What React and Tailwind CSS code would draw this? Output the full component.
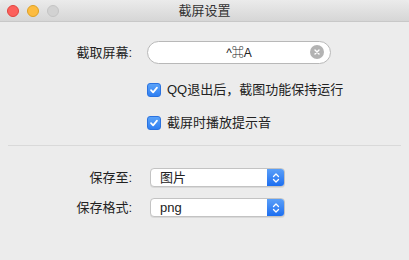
import React, { useState } from 'react';

const font = { fontFamily: '"Liberation Sans", "Noto Sans CJK SC", sans-serif' };

const Checkbox = ({ checked, onChange, label }) => (
  <label className="flex items-center h-[16px] cursor-default">
    <span
      onClick={onChange}
      className="flex items-center justify-center w-[14px] h-[14px] rounded-[3px] bg-gradient-to-b from-[#5aa2f8] to-[#2f7ff2] border border-[#2a72e0]"
    >
      {checked && (
        <svg width="10" height="10" viewBox="0 0 10 10">
          <path d="M2 5.2 L4.1 7.4 L8 2.6" fill="none" stroke="#fff" strokeWidth="1.7" strokeLinecap="round" strokeLinejoin="round" />
        </svg>
      )}
    </span>
    <span className="ml-[6px] text-[13px] leading-[16px] text-[#222]">{label}</span>
  </label>
);

const Popup = ({ value }) => (
  <div className="flex w-[135px] h-[19px] rounded-[4px] bg-white border border-[#c3c3c3] shadow-[0_1px_0_rgba(0,0,0,0.08)] overflow-hidden">
    <span className="flex-1 pl-[9px] text-[13px] leading-[17px] text-[#222]">{value}</span>
    <span className="flex items-center justify-center w-[17px] bg-gradient-to-b from-[#5a9ff8] to-[#1c6ef0]">
      <svg width="8" height="12" viewBox="0 0 8 12">
        <path d="M1.5 4.5 L4 2 L6.5 4.5 M1.5 7.5 L4 10 L6.5 7.5" fill="none" stroke="#fff" strokeWidth="1.3" strokeLinecap="round" strokeLinejoin="round" />
      </svg>
    </span>
  </div>
);

const App = () => {
  const [quitKeep, setQuitKeep] = useState(true);
  const [sound, setSound] = useState(true);

  return (
    <div className="w-[409px] h-[260px] bg-[#ececec] overflow-hidden" style={font}>
      {/* title bar */}
      <div className="relative flex items-center justify-center h-[22px] bg-gradient-to-b from-[#ebebeb] to-[#d6d6d6] border-b border-[#c8c8c8] rounded-t-[5px]">
        <div className="absolute left-[7px] top-[5px] flex gap-[8px]">
          <span className="w-[12px] h-[12px] rounded-full bg-[#fc605c] border border-[#e0443e]" />
          <span className="w-[12px] h-[12px] rounded-full bg-[#fdbc40] border border-[#dea123]" />
          <span className="w-[12px] h-[12px] rounded-full bg-[#d2d2d2] border border-[#c4c4c4]" />
        </div>
        <span className="text-[13px] leading-[16px] text-[#333]">截屏设置</span>
      </div>

      <div className="pt-[19px]">
        {/* shortcut field */}
        <div className="flex items-center h-[23px]">
          <span className="w-[132px] text-right text-[13px] leading-[16px] text-[#222]">截取屏幕:</span>
          <div className="relative ml-[15px] w-[184px] h-[23px] rounded-full bg-white border border-[#b8b8b8] flex items-center justify-center">
            <span className="text-[12px] leading-[16px] text-[#222]">^⌘A</span>
            <span className="absolute right-[6px] top-[3px] w-[14px] h-[14px] rounded-full bg-[#b3b3b3] flex items-center justify-center">
              <svg width="8" height="8" viewBox="0 0 8 8">
                <path d="M2 2 L6 6 M6 2 L2 6" stroke="#fff" strokeWidth="1.4" strokeLinecap="round" />
              </svg>
            </span>
          </div>
        </div>

        <div className="pl-[147px] pt-[18px] flex flex-col gap-[17px]">
          <Checkbox checked={quitKeep} onChange={() => setQuitKeep(!quitKeep)} label="QQ退出后，截图功能保持运行" />
          <Checkbox checked={sound} onChange={() => setSound(!sound)} label="截屏时播放提示音" />
        </div>

        <div className="mx-[8px] mt-[14px] border-t border-[#d9d9d9]" />

        <div className="pt-[22px] flex flex-col gap-[11px]">
          <div className="flex items-center h-[19px]">
            <span className="w-[132px] text-right text-[13px] leading-[16px] text-[#222]">保存至:</span>
            <div className="ml-[18px]">
              <Popup value="图片" />
            </div>
          </div>
          <div className="flex items-center h-[19px]">
            <span className="w-[132px] text-right text-[13px] leading-[16px] text-[#222]">保存格式:</span>
            <div className="ml-[18px]">
              <Popup value="png" />
            </div>
          </div>
        </div>
      </div>
    </div>
  );
};

export default App;
